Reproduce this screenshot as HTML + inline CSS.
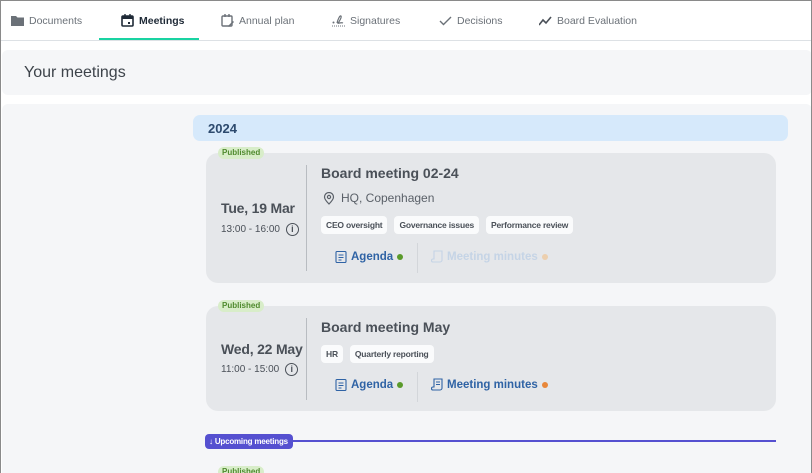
<!DOCTYPE html>
<html><head><style>
*{box-sizing:border-box;margin:0;padding:0}
html,body{width:812px;height:473px;overflow:hidden}
body{background:#fff;font-family:"Liberation Sans",Arial,sans-serif;position:relative}
.abs{position:absolute}
.frame{position:absolute;left:0;top:0;width:812px;height:480px;border:1px solid #8a8a8a;pointer-events:none;z-index:5}
.nav{position:absolute;left:0;top:0;width:812px;height:41px;border-bottom:1px solid #dde1e5}
.tab{position:absolute;top:14px;font-size:10.5px;color:#6b7178;display:flex;align-items:center;gap:5px;white-space:nowrap}
.tab svg{width:13px;height:13px}
.hdr{position:absolute;left:2px;top:50px;width:810px;height:45px;background:#f5f6f8;border-radius:6px}
.hdr span{position:absolute;left:22px;top:14px;font-size:16px;color:#3d434a}
.main{position:absolute;left:2px;top:104px;width:810px;height:380px;background:#f5f6f8;border-radius:6px}
.year{position:absolute;left:193px;top:115px;width:595px;height:26px;background:#d6e9fb;border-radius:7px;font-size:13px;font-weight:bold;color:#2d4a6e;padding:6px 15px}
.card{position:absolute;left:206px;width:570px;background:#e5e7ea;border-radius:12px}
.pub{position:absolute;left:218px;height:12px;padding:0 4px;background:#d8edc9;color:#4f8a2e;font-size:8px;font-weight:bold;line-height:12px;border-radius:6px}
.date{position:absolute;left:15px;font-size:14px;font-weight:bold;color:#4a5058;white-space:nowrap;letter-spacing:-0.2px}
.time{position:absolute;left:15px;font-size:10px;color:#4a5058;display:flex;align-items:center;gap:6px}
.info{width:13px;height:13px;border:1.2px solid #4a5058;border-radius:50%;font-size:9px;text-align:center;line-height:11px;font-weight:bold}
.vd{position:absolute;left:100px;width:1px;background:#b8bcc1}
.title{position:absolute;left:115px;font-size:14px;font-weight:bold;color:#4a5058}
.tags{position:absolute;left:115px;display:flex;gap:7px}
.tag{background:#fafbfc;border-radius:4px;font-size:8.5px;font-weight:bold;color:#4a5058;padding:4px 5px;letter-spacing:-0.2px}
.lnk{position:absolute;font-size:11.5px;font-weight:bold;color:#2f63a5;display:flex;align-items:center;gap:4px;white-space:nowrap}
.dot{width:6px;height:6px;border-radius:50%}
.sd{position:absolute;left:211px;width:1px;background:#d3d6da}
</style></head><body>
<div class="frame"></div>
<div class="nav">
<div class="tab" style="left:11px"><svg viewBox="0 0 13 13"><path d="M0 2h5l1.5 1.5H13V12H0z" fill="#6b7178"/></svg>Documents</div>
<div class="tab" style="left:121px;color:#1f2a37;font-weight:bold"><svg viewBox="0 0 13 13"><rect x="1" y="2" width="11" height="10" rx="1" fill="none" stroke="#1f2a37" stroke-width="1.6"/><rect x="1" y="2" width="11" height="3" fill="#1f2a37"/><path d="M4 0v3M9 0v3" stroke="#1f2a37" stroke-width="1.4"/><rect x="7" y="8" width="2" height="2" fill="#1f2a37"/></svg>Meetings</div>
<div class="abs" style="left:99px;top:38px;width:100px;height:2px;background:#19d3a2"></div>
<div class="tab" style="left:221px"><svg viewBox="0 0 13 13"><rect x="1" y="2" width="10" height="10" rx="1" fill="none" stroke="#6b7178" stroke-width="1.4"/><path d="M4 0v3M8 0v3" stroke="#6b7178" stroke-width="1.4"/><path d="M7 12l5-5 1 1-5 5z" fill="#6b7178"/></svg>Annual plan</div>
<div class="tab" style="left:332px"><svg viewBox="0 0 13 13"><path d="M5 9c1-4 3-8 4-7s-2 6-3 7 3-1 5 0" fill="none" stroke="#6b7178" stroke-width="1.2"/><path d="M0 12h13" stroke="#6b7178" stroke-dasharray="1 1"/><circle cx="1.5" cy="8.5" r="1" fill="#6b7178"/></svg>Signatures</div>
<div class="tab" style="left:439px"><svg viewBox="0 0 13 13"><path d="M1 7l3.5 3.5L12 3" fill="none" stroke="#6b7178" stroke-width="1.4"/></svg>Decisions</div>
<div class="tab" style="left:539px"><svg viewBox="0 0 13 13"><path d="M0 11l4-5 3 3 5-6" fill="none" stroke="#4a5058" stroke-width="1.6"/></svg>Board Evaluation</div>
</div>
<div class="hdr"><span>Your meetings</span></div>
<div class="main"></div>
<div class="year">2024</div>

<div class="card" style="top:153px;height:130px">
<div class="date" style="top:47px">Tue, 19 Mar</div>
<div class="time" style="top:70px">13:00 - 16:00 <div class="info">i</div></div>
<div class="vd" style="top:12px;height:106px"></div>
<div class="title" style="top:12px">Board meeting 02-24</div>
<div class="abs" style="left:117px;top:38px;font-size:12px;color:#5a6068;display:flex;gap:6px;align-items:center"><svg width="12" height="13" viewBox="0 0 12 13"><path d="M6 12S1.5 7.5 1.5 5a4.5 4.5 0 019 0C10.5 7.5 6 12 6 12z" fill="none" stroke="#5a6068" stroke-width="1.2"/><circle cx="6" cy="5" r="1.6" fill="none" stroke="#5a6068" stroke-width="1.2"/></svg>HQ, Copenhagen</div>
<div class="tags" style="top:63px"><span class="tag">CEO oversight</span><span class="tag">Governance issues</span><span class="tag">Performance review</span></div>
<div class="lnk" style="left:129px;top:97px"><svg width="12" height="13" viewBox="0 0 12 13"><rect x="1" y="1.5" width="10" height="11" rx="1" fill="none" stroke="#2f63a5" stroke-width="1.1"/><path d="M3.5 5h5M3.5 7.5h5M3.5 10h3" stroke="#2f63a5"/></svg>Agenda<span class="dot" style="background:#5a9a2a"></span></div>
<div class="sd" style="top:90px;height:30px"></div>
<div class="lnk" style="left:225px;top:97px;color:#c5d4e6"><svg width="12" height="13" viewBox="0 0 12 13"><path d="M3 1h8v9a2 2 0 01-2 2H2a1.5 1.5 0 010-3h1z" fill="none" stroke="#c5d4e6" stroke-width="1.1"/></svg>Meeting minutes<span class="dot" style="background:#eccfae"></span></div>
</div>
<div class="pub" style="top:147px">Published</div>

<div class="card" style="top:306px;height:105px">
<div class="date" style="top:35px">Wed, 22 May</div>
<div class="time" style="top:57px">11:00 - 15:00 <div class="info">i</div></div>
<div class="vd" style="top:12px;height:82px"></div>
<div class="title" style="top:13px">Board meeting May</div>
<div class="tags" style="top:39px"><span class="tag">HR</span><span class="tag">Quarterly reporting</span></div>
<div class="lnk" style="left:129px;top:72px"><svg width="12" height="13" viewBox="0 0 12 13"><rect x="1" y="1.5" width="10" height="11" rx="1" fill="none" stroke="#2f63a5" stroke-width="1.1"/><path d="M3.5 5h5M3.5 7.5h5M3.5 10h3" stroke="#2f63a5"/></svg>Agenda<span class="dot" style="background:#5a9a2a"></span></div>
<div class="sd" style="top:66px;height:30px"></div>
<div class="lnk" style="left:225px;top:72px"><svg width="12" height="13" viewBox="0 0 12 13"><path d="M3 1h8v9a2 2 0 01-2 2H2a1.5 1.5 0 010-3h1zM5 4h4M5 6.5h4" fill="none" stroke="#2f63a5" stroke-width="1.1"/></svg>Meeting minutes<span class="dot" style="background:#e8873a"></span></div>
</div>
<div class="pub" style="top:300px">Published</div>

<div class="abs" style="left:290px;top:440px;width:486px;height:2px;background:#5550d0"></div>
<div class="abs" style="left:205px;top:434px;width:88px;height:15px;background:#5550d0;border-radius:4px;color:#fff;font-size:8px;font-weight:bold;line-height:15px;padding-left:4px;white-space:nowrap;overflow:hidden;letter-spacing:-0.2px">↓ Upcoming meetings</div>
<div class="pub" style="top:466px">Published</div>
</body></html>
